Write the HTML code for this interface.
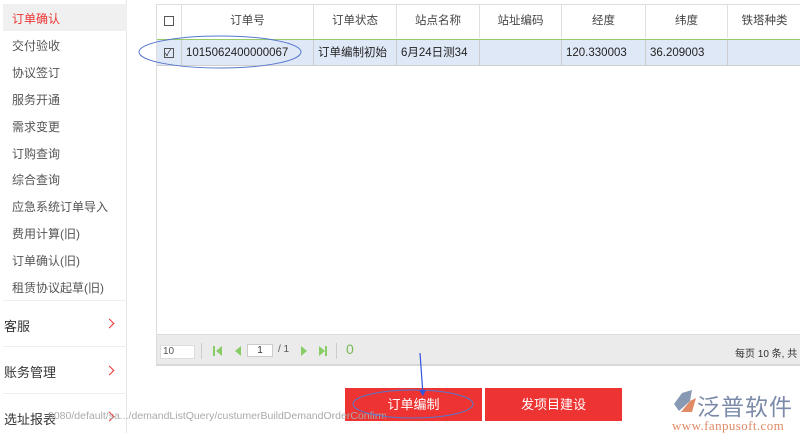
<!DOCTYPE html>
<html><head><meta charset="utf-8"><style>
*{margin:0;padding:0;box-sizing:border-box}
body{width:800px;height:433px;overflow:hidden;background:#fff;font-family:"Liberation Sans","Noto Sans CJK SC",sans-serif;font-size:12px;color:#333;position:relative}
.side{position:absolute;left:0;top:0;width:127px;height:433px;border-right:1px solid #e6e6e6}
.it{position:absolute;left:12px;font-size:12px;color:#555}
.sel{position:absolute;left:3px;top:4px;width:124px;height:27px;background:#f0f0f0}
.grp{position:absolute;left:4px;font-size:13px;color:#333}
.arr{position:absolute;left:106px;width:7px;height:7px;border-top:1.5px solid #e33;border-right:1.5px solid #e33;transform:rotate(45deg)}
.sep{position:absolute;left:3px;width:124px;height:1px;background:#eee}
.tbl{position:absolute;left:156px;top:4px;width:644px;height:362px;border:1px solid #ddd;border-right:none}
.hd{position:absolute;top:0;height:33px;border-right:1px solid #e0e0e0;text-align:center;line-height:33px;color:#444;font-size:11.5px}
.row{position:absolute;left:0;top:34px;width:644px;height:27px;background:#dfe8f6;border-top:1px solid #9c6;border-bottom:1px solid #d0d0d0}
.c{position:absolute;top:0;height:26px;line-height:26px;border-right:1px solid #ccc;padding-left:4px;color:#222;font-size:11.5px}
.pg{position:absolute;left:0;top:329px;width:644px;height:32px;background:#ebebeb;border-top:1px solid #ddd;border-bottom:2px solid #d8d8d8}
.btn{position:absolute;top:388px;height:33px;background:#ee3333;color:#fff;text-align:center;line-height:33px;font-size:13px}
</style></head><body>
<div class="side">
<div class="sel"></div>
<div class="it" style="top:10px;color:#e33">订单确认</div>
<div class="it" style="top:37px">交付验收</div>
<div class="it" style="top:64px">协议签订</div>
<div class="it" style="top:91px">服务开通</div>
<div class="it" style="top:118px">需求变更</div>
<div class="it" style="top:145px">订购查询</div>
<div class="it" style="top:171px">综合查询</div>
<div class="it" style="top:198px">应急系统订单导入</div>
<div class="it" style="top:225px">费用计算(旧)</div>
<div class="it" style="top:252px">订单确认(旧)</div>
<div class="it" style="top:279px">租赁协议起草(旧)</div>
<div class="sep" style="top:300px"></div>
<div class="grp" style="top:316px">客服</div><div class="arr" style="top:320px"></div>
<div class="sep" style="top:346px"></div>
<div class="grp" style="top:362px">账务管理</div><div class="arr" style="top:367px"></div>
<div class="sep" style="top:393px"></div>
<div class="grp" style="top:409px">选址报表</div><div class="arr" style="top:413px"></div>
</div>
<div class="tbl">
<div class="hd" style="left:0;width:25px"><span style="display:inline-block;width:10px;height:10px;border:1px solid #555;vertical-align:middle"></span></div>
<div class="hd" style="left:25px;width:132px">订单号</div>
<div class="hd" style="left:157px;width:83px">订单状态</div>
<div class="hd" style="left:240px;width:83px">站点名称</div>
<div class="hd" style="left:323px;width:82px">站址编码</div>
<div class="hd" style="left:405px;width:84px">经度</div>
<div class="hd" style="left:489px;width:82px">纬度</div>
<div class="hd" style="left:571px;width:73px;border:none">铁塔种类</div>
<div class="row">
<div class="c" style="left:0;width:25px;padding-left:7px"><span style="display:inline-block;width:10px;height:10px;border:1px solid #555;font-size:9px;line-height:8px;vertical-align:middle">✓</span></div>
<div class="c" style="left:25px;width:132px">1015062400000067</div>
<div class="c" style="left:157px;width:83px">订单编制初始</div>
<div class="c" style="left:240px;width:83px">6月24日测34</div>
<div class="c" style="left:323px;width:82px"></div>
<div class="c" style="left:405px;width:84px">120.330003</div>
<div class="c" style="left:489px;width:82px">36.209003</div>
</div>
<div class="pg">
<div style="position:absolute;left:3px;top:10px;width:35px;height:14px;background:#fff;border:1px solid #ddd;font-size:10px;line-height:12px;padding-left:2px;color:#555">10</div>
<div style="position:absolute;left:44px;top:8px;width:1px;height:16px;background:#ccc"></div>
<svg style="position:absolute;left:54px;top:9px" width="150" height="16">
<rect x="2" y="2" width="2" height="10" fill="#8c6"/><path d="M11 2 L5 7 L11 12Z" fill="#8c6"/>
<path d="M30 2 L24 7 L30 12Z" fill="#8c6"/>
<path d="M90 2 L96 7 L90 12Z" fill="#8c6"/>
<path d="M108 2 L114 7 L108 12Z" fill="#8c6"/><rect x="114" y="2" width="2" height="10" fill="#8c6"/>
</svg>
<div style="position:absolute;left:90px;top:9px;width:26px;height:13px;background:#fff;border:1px solid #ccc;font-size:10px;text-align:center;line-height:11px">1</div>
<div style="position:absolute;left:121px;top:9px;font-size:10px;color:#555">/ 1</div>
<div style="position:absolute;left:179px;top:8px;width:1px;height:16px;background:#ccc"></div>
<div style="position:absolute;left:189px;top:6px;color:#7b5;font-size:14px">0</div>
<div style="position:absolute;left:578px;top:10px;font-size:10px;color:#333;white-space:nowrap">每页 10 条, 共 1 条</div>
</div>
</div>
<div class="btn" style="left:345px;width:137px">订单编制</div>
<div class="btn" style="left:485px;width:137px">发项目建设</div>
<div style="position:absolute;left:0;top:410px;width:386px;height:12px;font-size:10.5px;line-height:12px;color:#aaa;white-space:nowrap;overflow:hidden;padding-left:48px">8080/default/sa.../demandListQuery/custumerBuildDemandOrderConfirmListNew.jsp</div>
<svg style="position:absolute;left:0;top:0" width="800" height="433">
<ellipse cx="220" cy="52" rx="81" ry="16" fill="none" stroke="#5577cc" stroke-width="1"/>
<ellipse cx="413" cy="404" rx="60" ry="14" fill="none" stroke="#5577cc" stroke-width="1"/>
<line x1="420" y1="353" x2="423" y2="395" stroke="#3355dd" stroke-width="1.2"/>
<path d="M419 390 L423 396 L426 390" fill="#3355dd"/>
<path d="M682 393 L692 390 L690 401 L679 411 L674 404 Z" fill="#8899b4"/>
<path d="M690 401 L696 398 L692 412 L681 412 Z" fill="#e08a66"/>
</svg>
<div style="position:absolute;left:697px;top:388px;font-size:23px;color:#7a8aa8;letter-spacing:1px">泛普软件</div>
<div style="position:absolute;left:672px;top:418px;font-family:'Liberation Serif',serif;font-size:13px;color:#e08a66;letter-spacing:0.4px">www.fanpusoft.com</div>
</body></html>
